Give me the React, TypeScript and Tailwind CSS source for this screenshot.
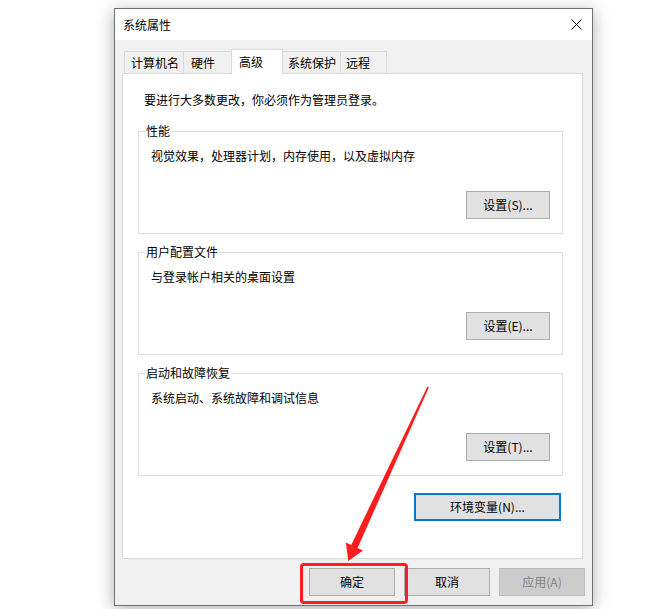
import React from "react";

function Btn({ label, className = "" }: { label: string; className?: string }) {
  return (
    <div
      className={
        "h-[28px] flex items-center justify-center bg-[#e1e1e1] border border-[#adadad] text-black " +
        className
      }
    >
      {label}
    </div>
  );
}

function Group({
  title,
  desc,
  btn,
  className = "",
}: {
  title: string;
  desc: string;
  btn: string;
  className?: string;
}) {
  return (
    <div
      className={
        "relative ml-[15px] w-[425px] h-[103px] border border-[#dcdcdc] flex flex-col pt-[16px] pl-[12px] pr-[12px] pb-[14px] " +
        className
      }
    >
      <div className="absolute -top-[9px] left-[6px] bg-white px-[1px]">{title}</div>
      <div>{desc}</div>
      <div className="mt-auto self-end">
        <Btn label={btn} className="w-[84px]" />
      </div>
    </div>
  );
}

export default function App() {
  return (
    <div className="relative w-[672px] h-[609px] overflow-hidden bg-white pl-[114px] pt-[8px] font-['Noto_Sans_CJK_SC','Noto_Sans',sans-serif] text-[12px] leading-[16px] text-black">
      <div className="w-[479px] h-[598px] border border-[#707070] bg-[#f0f0f0] shadow-[0_3px_16px_rgba(0,0,0,0.32)] flex flex-col">
        {/* title bar */}
        <div className="h-[31px] bg-white flex items-center justify-between pl-[8px] pr-[10px]">
          <span>系统属性</span>
          <svg width="11" height="11" viewBox="0 0 11 11">
            <path d="M0.5 0.5 L10.5 10.5 M10.5 0.5 L0.5 10.5" stroke="#000" strokeWidth="1" />
          </svg>
        </div>

        <div className="flex flex-col pt-[9px]">
          <div className="pl-[7px] pr-[9px] flex flex-col">
            {/* tabs */}
            <div className="ml-[2px] h-[24px] flex items-end">
              <div className="w-[60px] h-[22px] border border-b-0 border-[#d9d9d9] bg-[#f0f0f0] flex items-center pl-[6px]">
                计算机名
              </div>
              <div className="-ml-px w-[49px] h-[22px] border border-b-0 border-[#d9d9d9] bg-[#f0f0f0] flex items-center pl-[7px]">
                硬件
              </div>
              <div className="relative z-10 -ml-px -mb-px w-[52px] h-[25px] border border-b-0 border-[#d9d9d9] bg-white flex items-center pl-[7px]">
                高级
              </div>
              <div className="-ml-px w-[59px] h-[22px] border border-b-0 border-[#d9d9d9] bg-[#f0f0f0] flex items-center pl-[5px]">
                系统保护
              </div>
              <div className="-ml-px w-[47px] h-[22px] border border-b-0 border-[#d9d9d9] bg-[#f0f0f0] flex items-center pl-[5px]">
                远程
              </div>
            </div>

            {/* panel */}
            <div className="h-[486px] border border-[#d9d9d9] bg-white flex flex-col">
              <div className="pl-[21px] mt-[18px]">要进行大多数更改，你必须作为管理员登录。</div>
              <Group
                className="mt-[23px]"
                title="性能"
                desc="视觉效果，处理器计划，内存使用，以及虚拟内存"
                btn="设置(S)..."
              />
              <Group
                className="mt-[18px]"
                title="用户配置文件"
                desc="与登录帐户相关的桌面设置"
                btn="设置(E)..."
              />
              <Group
                className="mt-[18px]"
                title="启动和故障恢复"
                desc="系统启动、系统故障和调试信息"
                btn="设置(T)..."
              />
              <div className="mt-[17px] self-end mr-[21px] w-[147px] h-[28px] flex items-center justify-center bg-[#e1e1e1] border-2 border-[#0078d7]">
                环境变量(N)...
              </div>
            </div>
          </div>

          {/* bottom buttons */}
          <div className="mt-[9px] pr-[7px] flex justify-end gap-[9px]">
            <Btn label="确定" className="w-[86px]" />
            <Btn label="取消" className="w-[86px]" />
            <div className="w-[86px] h-[28px] flex items-center justify-center bg-[#cccccc] border border-[#bfbfbf] text-[#838383]">
              应用(A)
            </div>
          </div>
        </div>
      </div>

      {/* red highlight box */}
      <div className="absolute left-[300px] top-[563px] w-[108px] h-[41px] border-[3px] border-[#ff1d1d] rounded-[4px] pointer-events-none" />

      {/* red arrow */}
      <svg
        className="absolute left-0 top-0 pointer-events-none"
        width="672"
        height="609"
        viewBox="0 0 672 609"
      >
        <polygon
          points="428.8,387.4 357.6,548 363,550.5 348.3,561 345.8,542.6 351.2,545 427.4,386.6"
          fill="#ff1d1d"
        />
      </svg>
    </div>
  );
}
